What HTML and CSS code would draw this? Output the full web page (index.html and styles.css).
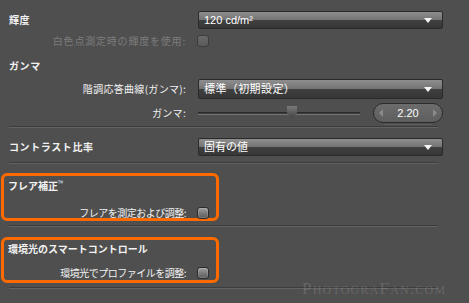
FILE: index.html
```html
<!DOCTYPE html>
<html lang="ja">
<head>
    <meta charset="UTF-8">
    <title>ディスプレイ設定</title>
    <link rel="stylesheet" href="styles.css">
</head>
<body>
    <div class="panel">
        <!-- 輝度 -->
        <div class="row">
            <div class="label title">輝度</div>
            <div class="select">120 cd/m²</div>
        </div>
        <div class="row row-check">
            <div class="label disabled">白色点測定時の輝度を使用:</div>
            <span class="check off"></span>
        </div>

        <!-- ガンマ -->
        <div class="heading">ガンマ</div>
        <div class="row row-tone">
            <div class="label">階調応答曲線(ガンマ):</div>
            <div class="select">標準（初期設定）</div>
        </div>
        <div class="row row-gamma">
            <div class="label">ガンマ:</div>
            <div class="slider">
                <span class="thumb"></span>
            </div>
            <div class="spin">
                <span class="spin-arrow left"></span>
                <span class="spin-value">2.20</span>
                <span class="spin-arrow right"></span>
            </div>
        </div>
        <div class="sep sep-gamma"></div>

        <!-- コントラスト比率 -->
        <div class="row row-contrast">
            <div class="label title">コントラスト比率</div>
            <div class="select">固有の値</div>
        </div>
        <div class="sep sep-contrast"></div>

        <!-- フレア補正 -->
        <div class="box box-flare">
            <div class="box-title">フレア補正<sup>™</sup></div>
            <div class="row box-row">
                <div class="label">フレアを測定および調整:</div>
                <span class="check"></span>
            </div>
        </div>
        <div class="sep sep-box"></div>

        <!-- 環境光 -->
        <div class="box box-ambient">
            <div class="box-title">環境光のスマートコントロール</div>
            <div class="row box-row">
                <div class="label">環境光でプロファイルを調整:</div>
                <span class="check"></span>
            </div>
        </div>
        <div class="sep sep-box"></div>

        <div class="watermark">PhotograFan.com</div>
    </div>
</body>
</html>
```

FILE: styles.css
```css
body {
    margin: 0;
    background-color: #4f4f4f;
    font-family: "Noto Sans CJK JP", "Liberation Sans", sans-serif;
    color: #f2f2f2;
}

.panel {
    position: relative;
    width: 469px;
    height: 303px;
    padding-top: 11px;
    box-sizing: border-box;
    overflow: hidden;
}

.row {
    display: flex;
    align-items: center;
    height: 18px;
}

.label {
    width: 186px;
    flex: none;
    text-align: right;
    font-size: 10px;
    letter-spacing: 0.3px;
    line-height: 14px;
}

.label.title,
.heading,
.box-title {
    text-align: left;
    font-weight: bold;
    font-size: 10px;
    letter-spacing: 0.6px;
    line-height: 14px;
}

.label.title {
    padding-left: 9px;
    box-sizing: border-box;
}

.label.disabled {
    color: #7c7c7c;
    letter-spacing: 0.8px;
}

.heading {
    margin: 12px 0 0 9px;
}

.select {
    position: relative;
    margin-left: 12px;
    width: 245px;
    height: 18px;
    box-sizing: border-box;
    border: 1px solid #2a2a2a;
    border-radius: 2px;
    background: linear-gradient(#8e8e8e, #747474 48%, #404040 52%, #363636);
    font-family: "Liberation Sans", "Noto Sans CJK JP", sans-serif;
    font-size: 11px;
    line-height: 16px;
    padding-left: 5px;
    color: #fff;
}

.select::after {
    content: "";
    position: absolute;
    right: 10px;
    top: 6px;
    border-left: 4px solid transparent;
    border-right: 4px solid transparent;
    border-top: 5px solid #f4f4f4;
}

.row-check {
    height: 12px;
    margin-top: 6px;
}

.check {
    margin-left: 11px;
    width: 12px;
    height: 12px;
    box-sizing: border-box;
    border: 1px solid #2c2c2c;
    border-radius: 3px;
    background: linear-gradient(#a0a0a0, #7a7a7a 50%, #5c5c5c);
    box-shadow: inset 0 0 0 1px rgba(255, 255, 255, 0.15);
}

.check.off {
    background: linear-gradient(#6a6a6a, #5a5a5a);
    border-color: #3c3c3c;
    box-shadow: none;
}

.row-tone {
    height: 20px;
    margin-top: 6px;
}

.row-tone .select {
    height: 20px;
    line-height: 18px;
    letter-spacing: 0.4px;
}

.row-tone .select::after {
    top: 7px;
}

.row-gamma {
    height: 20px;
    margin-top: 4px;
}

.slider {
    position: relative;
    margin-left: 12px;
    width: 162px;
    height: 3px;
    box-sizing: border-box;
    border-top: 1px solid #2b2b2b;
    border-bottom: 1px solid #767676;
    background: #3a3a3a;
}

.thumb {
    position: absolute;
    left: 89px;
    top: -7px;
    width: 10px;
    height: 13px;
    background: linear-gradient(#7a7a7a, #3e3e3e);
    clip-path: polygon(0 0, 100% 0, 100% 55%, 50% 100%, 0 55%);
}

.spin {
    position: relative;
    margin-left: 13px;
    width: 70px;
    height: 20px;
    box-sizing: border-box;
    border: 1px solid #2c2c2c;
    border-radius: 10px;
    background: linear-gradient(#6c6c6c, #5e5e5e);
    display: flex;
    align-items: center;
    justify-content: space-between;
    padding: 0 5px;
}

.spin::after {
    content: "";
    position: absolute;
    left: 10px;
    right: 10px;
    bottom: -3px;
    border-top: 1px solid #5d5d5d;
}

.spin-value {
    font-family: "Liberation Sans", sans-serif;
    font-size: 11px;
    color: #fff;
}

.spin-arrow {
    width: 0;
    height: 0;
    border-top: 4px solid transparent;
    border-bottom: 4px solid transparent;
}

.spin-arrow.left {
    border-right: 4px solid #8a8a8a;
}

.spin-arrow.right {
    border-left: 4px solid #8a8a8a;
}

.sep {
    margin: 4px 0 0 9px;
    width: 429px;
    border-top: 1px solid #3c3c3c;
    border-bottom: 1px solid #636363;
}

.sep-gamma {
    margin-top: 3px;
}

.row-contrast {
    margin-top: 10px;
}

.sep-contrast {
    margin-top: 6px;
}

.box {
    margin: 9px 0 0 1px;
    width: 218px;
    height: 48px;
    box-sizing: border-box;
    border: 3px solid #ff6a00;
    border-radius: 6px;
}

.box-ambient {
    margin-top: 10px;
    height: 46px;
}

.box-title {
    margin: 0 0 0 4px;
    letter-spacing: 0;
}

.box-title sup {
    font-size: 7px;
    color: #cfe0ff;
    vertical-align: 4px;
    font-weight: normal;
}

.box-ambient .box-title {
    margin-top: 2px;
}

.box-row {
    margin-top: 14px;
    height: 12px;
}

.box-ambient .box-row {
    margin-top: 11px;
}

.box .label {
    width: 182px;
    letter-spacing: -0.5px;
}

.watermark {
    position: absolute;
    left: 302px;
    top: 279px;
    font-family: "Liberation Serif", serif;
    font-variant: small-caps;
    font-size: 17px;
    letter-spacing: 1.2px;
    color: rgba(255, 255, 255, 0.14);
}
```
